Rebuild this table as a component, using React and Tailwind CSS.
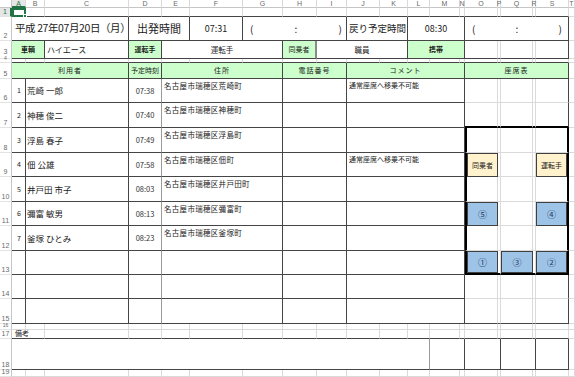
import React from "react";

const LR = "border-r border-r-[#dadada]";
const DR = "border-r border-r-[#454545]";
const MR = "border-r border-r-[#9a9a9a]";
const HR = "border-r-2 border-r-[#8a8a8a]";
const TR = "border-r-2 border-r-black";
const LB = "border-b border-b-[#dadada]";
const DB = "border-b border-b-[#454545]";
const TB = "border-b-2 border-b-black";
const TL = "border-l-2 border-l-black";
const GREEN = "bg-[#ccffcc]";
const CENTER = "flex items-center justify-center";

function X({ s = "", r = LR, b = LB, x = "", children }) {
  return <div className={`min-w-0 whitespace-nowrap leading-none ${s} ${r} ${b} ${x}`}>{children}</div>;
}

function RH({ n, sel, small, lift }) {
  return (
    <div
      className={`flex items-end justify-center leading-none border-b border-b-[#e3e3e3] font-['Liberation_Sans',sans-serif] ${
        small ? "text-[5px]" : "text-[7px]"
      } ${lift ? "pb-[3px]" : "pb-[1px]"} ${
        sel ? "border-r-2 border-r-[#217346] text-[#217346] bg-[#e6e6e6]" : "border-r border-r-[#c6c6c6] text-[#6a6a6a]"
      }`}
    >
      {n}
    </div>
  );
}

function CH({ l, sel }) {
  return (
    <div
      className={`flex items-center justify-center text-[7px] leading-none font-['Liberation_Sans',sans-serif] border-r border-r-[#dadada] ${
        sel ? "border-b-2 border-b-[#217346] text-[#217346] bg-[#e6e6e6]" : "border-b border-b-[#c6c6c6] text-[#6a6a6a]"
      }`}
    >
      {l}
    </div>
  );
}

function Box({ color, children }) {
  return (
    <div className={`h-full w-full border border-[#404040] ${color} ${CENTER} text-[7px] leading-none text-[#222]`}>
      {children}
    </div>
  );
}

const YEL = "bg-[#fff2cc]";
const BLUE = "bg-[#9dc3e6]";

const people = [
  { n: "1", name: "荒崎 一郎", t: "07:38", addr: "名古屋市瑞穂区荒崎町", c: "通常座席へ移乗不可能" },
  { n: "2", name: "神穂 俊二", t: "07:40", addr: "名古屋市瑞穂区神穂町" },
  { n: "3", name: "浮島 春子", t: "07:49", addr: "名古屋市瑞穂区浮島町" },
  { n: "4", name: "佃 公雄", t: "07:58", addr: "名古屋市瑞穂区佃町", c: "通常座席へ移乗不可能" },
  { n: "5", name: "井戸田 市子", t: "08:03", addr: "名古屋市瑞穂区井戸田町" },
  { n: "6", name: "彌富 敏男", t: "08:13", addr: "名古屋市瑞穂区彌富町" },
  { n: "7", name: "釜塚 ひとみ", t: "08:23", addr: "名古屋市瑞穂区釜塚町" },
  {},
  {},
  {},
];

function Seat({ row }) {
  const circ = "text-[9px] text-[#1f3864]";
  if (row === 6 || row === 14)
    return (
      <>
        <X /> <X /> <X /> <X /> <X r={DR} />
      </>
    );
  if (row === 15)
    return (
      <>
        <X b={DB} /> <X b={DB} /> <X b={DB} /> <X b={DB} /> <X r={DR} b={DB} />
      </>
    );
  if (row === 7)
    return (
      <>
        <X b={TB} /> <X b={TB} /> <X b={TB} /> <X b={TB} /> <X r={DR} b={TB} />
      </>
    );
  if (row === 8 || row === 10 || row === 12)
    return (
      <>
        <X x={TL} /> <X /> <X /> <X /> <X r={TR} />
      </>
    );
  if (row === 9)
    return (
      <>
        <X x={TL} r="" b="">
          <Box color={YEL}>同乗者</Box>
        </X>
        <X /> <X /> <X />
        <X r={TR} b="">
          <Box color={YEL}>運転手</Box>
        </X>
      </>
    );
  if (row === 11)
    return (
      <>
        <X x={TL} r="" b="">
          <Box color={BLUE}><span className={circ}>⑤</span></Box>
        </X>
        <X /> <X /> <X />
        <X r={TR} b="">
          <Box color={BLUE}><span className={circ}>④</span></Box>
        </X>
      </>
    );
  return (
    <>
      <X x={TL} r="" b={TB}>
        <Box color={BLUE}><span className={circ}>①</span></Box>
      </X>
      <X b={TB} />
      <X r="" b={TB}>
        <Box color={BLUE}><span className={circ}>③</span></Box>
      </X>
      <X b={TB} />
      <X r={TR} b={TB}>
        <Box color={BLUE}><span className={circ}>②</span></Box>
      </X>
    </>
  );
}

const letters = ["A", "B", "C", "D", "E", "F", "G", "H", "I", "J", "K", "L", "M", "N", "O", "P", "Q", "R", "S", "T"];

export default function App() {
  return (
    <div className="w-[575px] h-[377px] overflow-hidden bg-white text-[#1b1b1b] font-['Noto_Sans_CJK_JP',sans-serif]">
      <div className="grid grid-cols-[12px_14px_19px_84px_33px_28px_53px_40px_34px_30px_33px_28px_22px_30px_5px_33px_3px_32px_3px_33px_6px] grid-rows-[8px_9px_24px_18px_4px_16px_24px_25px_25px_24px_25px_24px_25px_24px_24px_25px_6px_9px_31px_7px]">
        {/* column header */}
        <div className="border-r border-r-[#c6c6c6] border-b border-b-[#c6c6c6] bg-white" />
        {letters.map((l) => (
          <CH key={l} l={l} sel={l === "A"} />
        ))}

        {/* row 1 */}
        <RH n="1" sel />
        <div className="relative border-2 border-[#217346]">
          <div className="absolute -right-[3px] -bottom-[3px] w-[4px] h-[4px] bg-[#217346] border border-white" />
        </div>
        {letters.slice(1, 19).map((l) => (
          <X key={l} b={DB} />
        ))}
        <X />

        {/* row 2 */}
        <RH n="2" />
        <X s="col-span-3" r={DR} b={DB} x="flex items-center pl-[3px] text-[10.5px] tracking-[-0.4px]">
          平成 27年07月20日（月）
        </X>
        <X s="col-span-2" r={DR} b={DB} x={`${CENTER} text-[11px]`}>
          出発時間
        </X>
        <X r={DR} b={DB} x={`${CENTER} text-[9px]`}>
          07:31
        </X>
        <X s="col-span-3" r={DR} b={DB} x="flex items-center justify-between pl-[7px] pr-[4px] text-[10px]">
          <span>(</span>
          <span>:</span>
          <span>)</span>
        </X>
        <X s="col-span-2" r={DR} b={DB} x="flex items-center pl-[2px] text-[9.5px] overflow-hidden">
          戻り予定時間
        </X>
        <X s="col-span-3" r={DR} b={DB} x={`${CENTER} text-[9px]`}>
          08:30
        </X>
        <X s="col-span-5" r={DR} b={DB} x="flex items-center justify-between pl-[7px] pr-[6px] text-[10px]">
          <span>(</span>
          <span>:</span>
          <span>)</span>
        </X>
        <X />

        {/* row 3 */}
        <RH n="3" lift />
        <X s="col-span-2" r={DR} b={DB} x={`${GREEN} ${CENTER} text-[7px] font-bold`}>
          車輌
        </X>
        <X r={DR} b={DB} x="flex items-center pl-[2px] text-[8px]">
          ハイエース
        </X>
        <X r={DR} b={DB} x={`${GREEN} ${CENTER} text-[7px] font-bold`}>
          運転手
        </X>
        <X s="col-span-3" r={DR} b={DB} x={`${CENTER} text-[7.5px]`}>
          運転手
        </X>
        <X r={HR} b={DB} x={`${GREEN} ${CENTER} text-[7px]`}>
          同乗者
        </X>
        <X s="col-span-3" r={DR} b={DB} x={`${CENTER} text-[7.5px]`}>
          職員
        </X>
        <X s="col-span-3" r={DR} b={DB} x={`${GREEN} ${CENTER} text-[7px] font-bold`}>
          携帯
        </X>
        <X b={DB} /> <X b={DB} /> <X b={DB} /> <X b={DB} />
        <X r={DR} b={DB} />
        <X />

        {/* row 4 */}
        <RH n="4" small />
        {letters.slice(0, 19).map((l) => (
          <X key={l} b={DB} />
        ))}
        <X />

        {/* row 5 */}
        <RH n="5" />
        <X s="col-span-3" r={DR} b={DB} x={`${GREEN} ${CENTER} text-[7px] tracking-[1px]`}>
          利用者
        </X>
        <X r={DR} b={DB} x={`${GREEN} ${CENTER} text-[7px]`}>
          予定時刻
        </X>
        <X s="col-span-3" r={DR} b={DB} x={`${GREEN} ${CENTER} text-[7px] tracking-[1px]`}>
          住所
        </X>
        <X s="col-span-2" r={DR} b={DB} x={`${GREEN} ${CENTER} text-[7px] tracking-[1px]`}>
          電話番号
        </X>
        <X s="col-span-5" r={DR} b={DB} x={`${GREEN} ${CENTER} text-[7px] tracking-[1px]`}>
          コメント
        </X>
        <X s="col-span-5" r={DR} b={DB} x={`${GREEN} ${CENTER} text-[7px] tracking-[1px]`}>
          座席表
        </X>
        <X />

        {/* rows 6-15 */}
        {people.map((p, i) => {
          const row = i + 6;
          return (
            <React.Fragment key={row}>
              <RH n={String(row)} />
              <X r={DR} b={DB} x="flex items-center pl-[5px] text-[7px]">
                {p.n}
              </X>
              <X s="col-span-2" r={DR} b={DB} x="flex items-center pl-[1px] text-[8.5px]">
                {p.name}
              </X>
              <X r={MR} b={DB} x={`${CENTER} text-[7.5px] text-[#333]`}>
                {p.t}
              </X>
              <X s="col-span-3" r={DR} b={DB} x="pl-[2px] pt-[3px] text-[7.5px] tracking-[0.3px]">
                {p.addr}
              </X>
              <X s="col-span-2" r={DR} b={DB} />
              <X s="col-span-5" r={DR} b={DB} x="pl-[2px] pt-[3px] text-[7px]">
                {p.c}
              </X>
              <Seat row={row} />
              <X />
            </React.Fragment>
          );
        })}

        {/* row 16 */}
        <RH n="16" small />
        {letters.map((l) => (
          <X key={l} />
        ))}

        {/* row 17 */}
        <RH n="17" />
        <X s="col-span-2" b={DB} x="flex items-end pl-[3px] pb-[1px] text-[7px]">
          備考
        </X>
        {letters.slice(2, 19).map((l) => (
          <X key={l} b={DB} />
        ))}
        <X />

        {/* row 18 */}
        <RH n="18" />
        <X s="col-span-12" r={MR} b={DB} />
        <X s="col-span-2" r={DR} b={DB} />
        <X s="col-span-2" r={DR} b={DB} />
        <X s="col-span-2" r={DR} b={DB} />
        <X r={DR} b={DB} />
        <X />

        {/* row 19 */}
        <RH n="19" />
        {letters.map((l) => (
          <X key={l} />
        ))}
      </div>
    </div>
  );
}
